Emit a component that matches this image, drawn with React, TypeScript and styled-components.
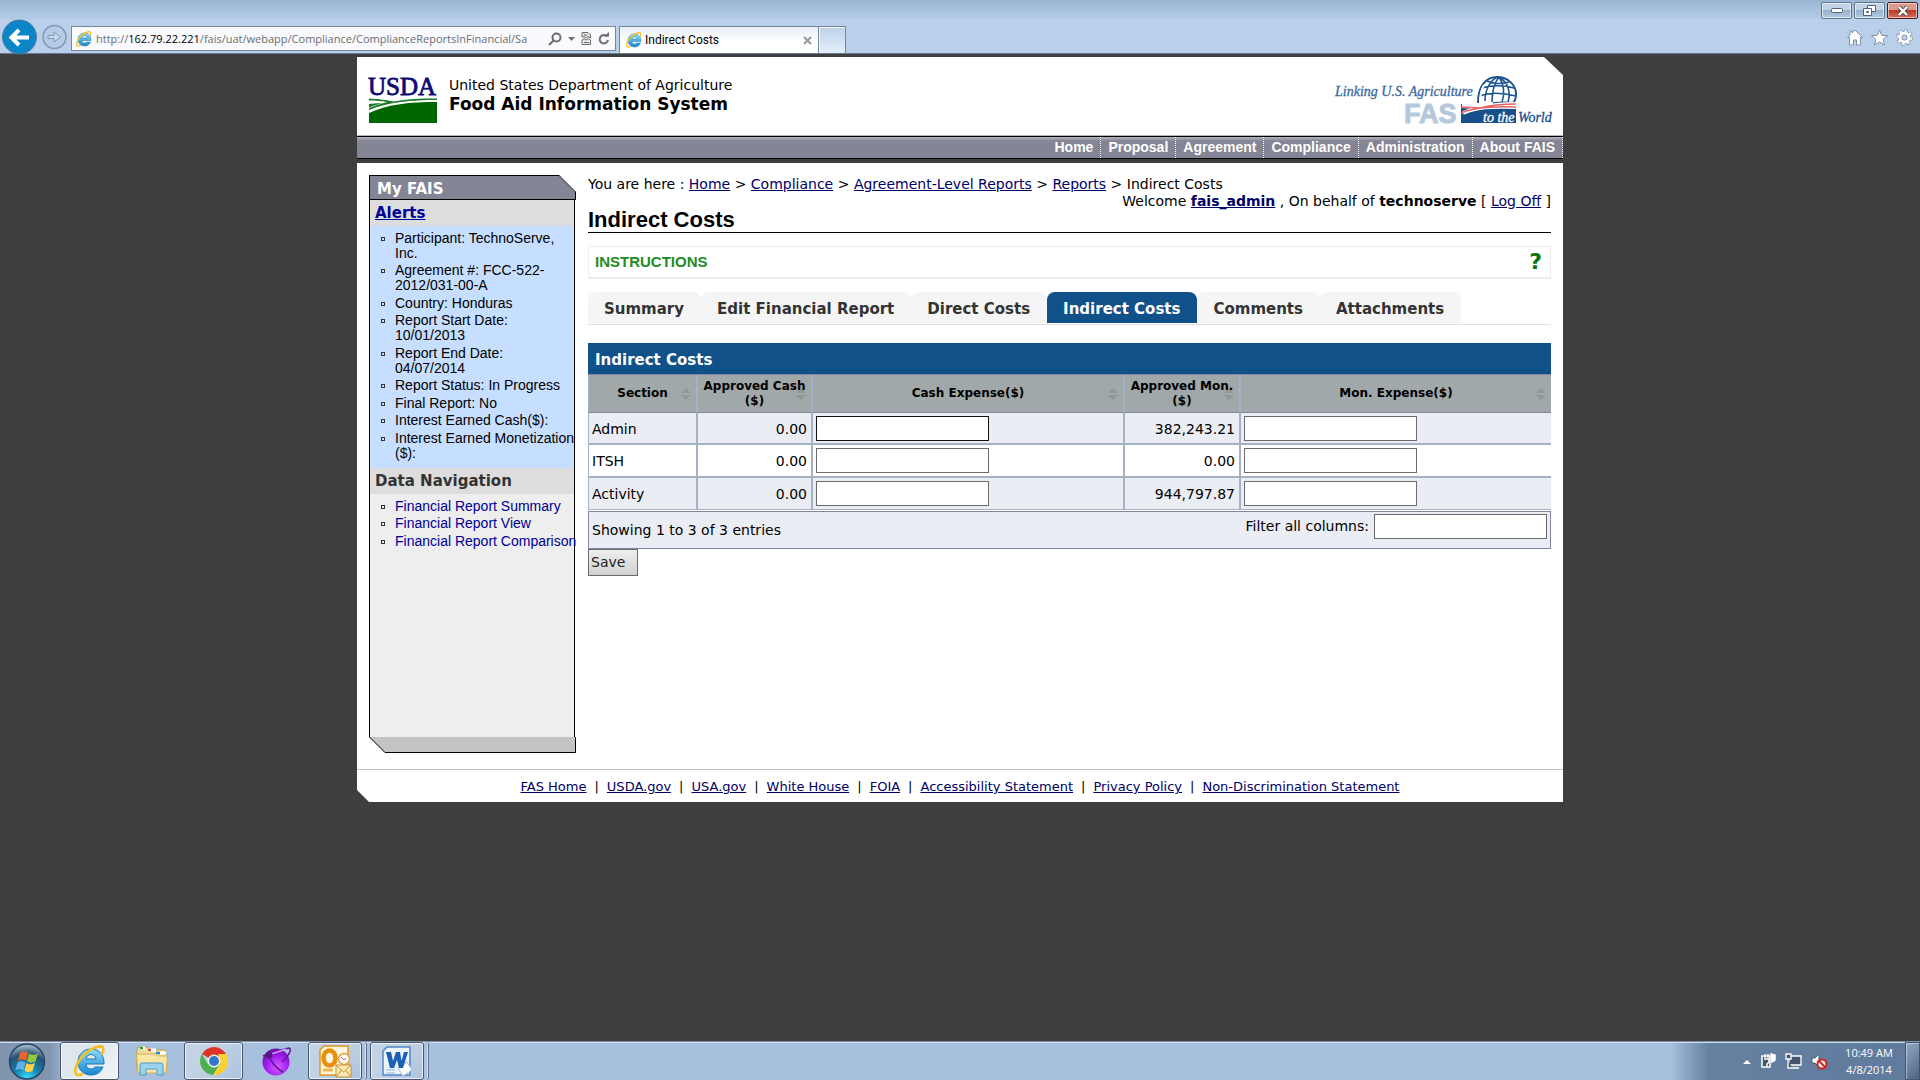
import React from "react";
import styled, { createGlobalStyle, css } from "styled-components";

const verdana = `Verdana, "DejaVu Sans", sans-serif`;
const arial = `Arial, "Liberation Sans", sans-serif`;
const segoe = `"Segoe UI", "Open Sans", "Noto Sans", sans-serif`;
const segoeNarrow = `"Segoe UI", Roboto, "Noto Sans", sans-serif`;

const GlobalStyle = createGlobalStyle`
  *, *::before, *::after { box-sizing: border-box; }
  body { margin: 0; background: #3e3e3e; color: #000; font: 14px/17px ${verdana}; }
  ul { list-style: none; margin: 0; padding: 0; }
  button, input { font: inherit; margin: 0; }
  svg { display: block; flex: none; overflow: visible; }
`;

const Screen = styled.div`
  display: flex;
  flex-direction: column;
  min-height: 100vh;
`;

/* Browser window */

const Chrome = styled.header`
  position: relative;
  display: flex;
  align-items: flex-end;
  height: 54px;
  border-bottom: 1px solid #66788f;
  background: linear-gradient(#9bb6d2 0, #b2cae5 18px, #bad0ea 20px);
`;

const NavButton = styled.button`
  border: 0;
  padding: 0;
  background: none;
`;

const BackForward = styled.div`
  display: flex;
  align-items: center;
  width: 71px;
  height: 34px;
  gap: 4px;
  padding: 2px 0 0 1px;
`;

const AddressBar = styled.div`
  display: flex;
  align-items: center;
  width: 545px;
  height: 25px;
  margin-bottom: 2px;
  padding: 0 5px 0 4px;
  gap: 4px;
  border: 1px solid #75859a;
  background: #f8fafd;
  color: #6d6d6d;
  font: 11px/20px ${segoe};
`;

const Address = styled.div`
  flex: 1;
  white-space: nowrap;
  b { color: #000; font-weight: 400; }
`;

const AddressTools = styled.div`
  display: flex;
  align-items: center;
  gap: 6px;
`;

const BrowserTab = styled.div`
  display: flex;
  align-items: center;
  gap: 3px;
  width: 200px;
  height: 27px;
  margin-left: 3px;
  padding: 0 6px;
  border: 1px solid #75859a;
  border-bottom: 0;
  background: linear-gradient(#e9eff5, #fff 60%);
  font: 12px/20px ${segoeNarrow};
  span { flex: 1; }
`;

const NewTab = styled.button`
  width: 27px;
  height: 27px;
  border: 1px solid #75859a;
  border-width: 1px 1px 0 0;
  background: linear-gradient(#bdd2e9, #e4eef8);
  box-shadow: inset 1px 1px #f4f8fc;
`;

const WindowSide = styled.div`
  display: flex;
  flex-direction: column;
  align-items: flex-end;
  justify-content: space-between;
  height: 100%;
  margin-left: auto;
  padding: 2px 2px 7px 0;
`;

const WindowButtons = styled.div`
  display: flex;
  gap: 2px;
`;

const WindowButton = styled.button<{ $close?: boolean }>`
  display: grid;
  place-items: center;
  width: 31px;
  height: 17px;
  padding: 0;
  border: 1px solid ${(p) => (p.$close ? "#5a1722" : "#5f7690")};
  border-radius: 2px;
  box-shadow: inset 0 0 0 1px rgba(255, 255, 255, 0.55);
  background: ${(p) =>
    p.$close
      ? "linear-gradient(#dc9a8d 45%, #b93a25 50%, #d4705a)"
      : "linear-gradient(#c0d3e7 45%, #96b1cd 50%, #b4cbe3)"};
`;

const ToolIcons = styled.div`
  display: flex;
  gap: 8px;
  padding-right: 5px;
`;

/* Site */

const Desktop = styled.main`
  flex: 1;
  padding: 3px 12px 40px;
`;

const Site = styled.div`
  width: 100%;
  max-width: 1206px;
  margin: 0 auto;
`;

const Banner = styled.header`
  display: flex;
  align-items: center;
  height: 79px;
  padding: 8px 10px 0 11px;
  border-bottom: 1px solid #b5b5b5;
  background: #fff;
  clip-path: polygon(0 0, calc(100% - 19px) 0, 100% 18px, 100% 100%, 0 100%);
`;

const BannerTitle = styled.div`
  flex: 1;
  padding: 0 0 10px 11px;
  font-size: 14px;
  line-height: 19px;
  strong { display: block; font-size: 17px; }
`;

const MainMenu = styled.nav`
  display: flex;
  justify-content: flex-end;
  height: 23px;
  border: solid #000;
  border-width: 1px 0;
  background: linear-gradient(#b4b4c0, #848594 4px);
  a {
    padding: 0 7px;
    border-right: 1px dotted #fff;
    color: #fff;
    font: bold 14px/20px ${arial};
    text-decoration: none;
  }
`;

const Body = styled.div`
  margin-top: 4px;
  background: #fff;
  clip-path: polygon(0 0, 100% 0, 100% 100%, 12px 100%, 0 calc(100% - 12px));
`;

const Columns = styled.div`
  display: grid;
  grid-template-columns: 207px minmax(0, 1fr);
  gap: 12px;
  padding: 12px 12px 16px;
`;

const Sidebar = styled.aside`
  display: flex;
  flex-direction: column;
  min-height: 578px;
`;

const SideTitle = styled.div`
  position: relative;
  height: 25px;
  padding-left: 7px;
  border: 1px solid #000;
  background: #848594;
  color: #fff;
  font: bold 15px/26px ${verdana};
  svg { position: absolute; top: -1px; right: -1px; overflow: hidden; }
`;

const SidePanel = styled.div`
  flex: 1;
  margin-right: 1px;
  border: solid #000;
  border-width: 0 1px;
  background: #eee;
`;

const SideHeading = styled.h2`
  height: 26px;
  margin: 0;
  padding-left: 5px;
  background: #ddd;
  color: #333;
  font: bold 15px/27px ${verdana};
  a { color: #009; }
`;

const sideList = css`
  font: 14px/15px ${arial};
  li {
    position: relative;
    margin: 0 -2px 2px 0;
    padding-left: 25px;
  }
  li:nth-child(even) { margin-bottom: 3px; }
  li::before {
    content: "";
    position: absolute;
    top: 6px;
    left: 11px;
    width: 4px;
    height: 4px;
    border: 1px solid #333;
  }
`;

const AlertList = styled.ul`
  ${sideList}
  height: 242px;
  padding-top: 5px;
  background: #c6deff;
`;

const LinkList = styled.ul`
  ${sideList}
  padding-top: 5px;
  white-space: nowrap;
  a { color: #009; text-decoration: none; }
`;

const SideFoot = styled.svg`
  width: 207px;
  height: 16px;
`;

const Content = styled.section`
  padding-top: 1px;
  a { color: #006; }
`;

const Welcome = styled.div`
  text-align: right;
`;

const PageTitle = styled.h1`
  margin: 0 0 13px;
  padding-bottom: 3px;
  border-bottom: 1px solid #000;
  font: bold 22px/19px ${arial};
`;

const Instructions = styled.div`
  display: flex;
  align-items: center;
  justify-content: space-between;
  height: 33px;
  padding: 0 8px 0 6px;
  border: 1px solid #eee;
  border-bottom-width: 2px;
  color: #228b22;
  font: bold 15px/30px ${arial};
`;

const HelpButton = styled.button`
  padding: 0;
  border: 0;
  background: none;
  color: #0a730a;
  font: bold 22px/28px ${verdana};
`;

const Tabs = styled.nav`
  display: flex;
  margin: 13px 0 18px;
  padding-bottom: 1px;
  border-bottom: 1px solid #e0e0e0;
`;

const Tab = styled.a<{ $active?: boolean }>`
  && {
    padding: 4px 17px 0 16px;
    border-radius: 8px 8px 0 0;
    background: ${(p) => (p.$active ? "#11518a" : "#f5f5f5")};
    color: ${(p) => (p.$active ? "#fff" : "#333")};
    font-weight: bold;
    font-size: 15px;
    line-height: 27px;
    text-decoration: none;
  }
`;

const Grid = styled.table`
  width: 100%;
  border-collapse: separate;
  border-spacing: 0;
  table-layout: fixed;
  caption {
    padding: 3px 0 0 7px;
    border-bottom: 1px solid #84859a;
    background: #11518a;
    color: #fff;
    text-align: left;
    font: bold 15px/28px ${verdana};
  }
  col:nth-child(1) { width: 108px; }
  col:nth-child(2) { width: 115px; }
  col:nth-child(4) { width: 116px; }
`;

const HeadCell = styled.th`
  height: 38px;
  padding: 0;
  border: solid #a5b1c5;
  border-width: 0 0 0 2px;
  border-bottom: 1px solid #84859a;
  background: #a0a8a9;
  font-size: 12px;
  line-height: 15px;
  &:first-child { border-left-width: 1px; }
`;

const HeadLabel = styled.div<{ $wide?: boolean }>`
  position: relative;
  padding: 0 ${(p) => (p.$wide ? "20px" : "0")};
  svg { position: absolute; top: calc(50% - 7px); right: 4px; z-index: 0; }
  span { position: relative; z-index: 1; }
`;

const Row = styled.tr<{ $odd?: boolean }>`
  background: ${(p) => (p.$odd ? "#eaedf3" : "#fff")};
`;

const Cell = styled.td<{ $right?: boolean; $field?: boolean }>`
  height: 33px;
  padding: ${(p) => (p.$field ? "0" : "2px")} 4px 0 3px;
  border: solid #a5b1c5;
  border-width: 0 0 2px 2px;
  text-align: ${(p) => (p.$right ? "right" : "left")};
  &:first-child { border-left-width: 1px; }
  tr:first-child > & { height: 32px; }
  tr:last-child > & { height: 32px; border-bottom-width: 1px; }
`;

const Field = styled.input<{ $focus?: boolean }>`
  display: block;
  width: 173px;
  height: 25px;
  padding: 0 3px;
  border: 1px solid ${(p) => (p.$focus ? "#111" : "#6b6b6b")};
  background: #fff;
`;

const GridFoot = styled.div`
  display: flex;
  align-items: flex-start;
  justify-content: space-between;
  height: 38px;
  margin-top: 1px;
  padding: 2px 3px;
  border: 1px solid #84859a;
  background: #eaedf3;
  span { line-height: 32px; }
  label { display: flex; align-items: center; gap: 5px; }
`;

const SaveButton = styled.button`
  display: block;
  width: 50px;
  height: 27px;
  padding: 0 0 0 2px;
  border: 1px solid #6b6b6b;
  background: linear-gradient(#eee, #d2d2d2);
  color: #222;
  text-align: left;
`;

const FootLinks = styled.footer`
  display: flex;
  justify-content: center;
  gap: 8px;
  height: 33px;
  border-top: 1px solid #c0c0c0;
  font-size: 13px;
  line-height: 33px;
  a { color: #006; }
`;

/* Taskbar */

const Taskbar = styled.footer`
  display: flex;
  align-items: stretch;
  height: 39px;
  border-top: 1px solid #7c8ea6;
  box-shadow: inset 0 1px #cfdcea;
  background: linear-gradient(90deg, #8295ae 0, #8295ae 50px, #a6c0dd 70px, #a6c0dd 87%, #6580a1 89%, #5f7a9c);
`;

const TaskButton = styled.button<{ $look?: "open" | "active" | "start"; $stacked?: boolean }>`
  display: grid;
  place-items: center;
  width: ${(p) => (p.$stacked || p.$look === "start" ? "54px" : "59px")};
  margin: 0 0 0 3px;
  padding: 0;
  border: 1px solid transparent;
  border-radius: 3px;
  background: none;
  ${(p) => p.$look === "start" && "margin: 0 3px 0 0;"}
  ${(p) =>
    (p.$look === "open" || p.$look === "active") &&
    css`
      border-color: #45566e;
      box-shadow: inset 0 0 0 1px rgba(255, 255, 255, 0.7);
      background: ${p.$look === "active"
        ? "linear-gradient(135deg, #dfe6ee 40%, #f1f5fa)"
        : "linear-gradient(135deg, #c4d3e4 35%, #adc4de)"};
    `}
`;

const TaskStack = styled.div`
  display: flex;
  border-right: 1px solid #5c6f88;
  padding-right: 4px;
  box-shadow: inset -1px 0 #d3e0ee;
  border-radius: 3px;
`;

const Tray = styled.div`
  display: flex;
  align-items: center;
  gap: 9px;
  margin-left: auto;
  color: #fff;
  font: 12px/17px ${segoe};
  time { width: 64px; padding-left: 2px; font-size: 11px; text-align: center; white-space: nowrap; }
`;

const ShowDesktop = styled.button`
  align-self: stretch;
  width: 15px;
  margin-left: -4px;
  padding: 0;
  border: 1px solid #3f5572;
  box-shadow: inset 1px 1px rgba(255, 255, 255, 0.4);
  background: linear-gradient(135deg, #93a9c3, #4c6585);
`;

function IeIcon({ size }: { size: number }) {
  return (
    <svg width={size} height={size} viewBox="0 0 32 32">
      <defs>
        <linearGradient id="ie" x1="0" y1="0" x2="0" y2="1">
          <stop offset="0" stopColor="#8adcf8" />
          <stop offset="1" stopColor="#1b86cf" />
        </linearGradient>
      </defs>
      <path
        d="M17 4C9 4 4 10 4 17s5 13 13 13c6 0 10-3 12-8h-8c-1 1.500-2.500 2-4 2-3 0-5-2-5-5h18C30.500 10 25 4 17 4zm-5 10c.5-3 2.500-4.500 5-4.500s4.500 1.500 5 4.500z"
        fill="url(#ie)"
        stroke="#1d78b8"
        strokeWidth="1"
      />
      <path
        d="M28 9C31 3 29 0 23 2 15 4 5 13 2 22c-2 6 0 10 6 7"
        fill="none"
        stroke="#f5bf1c"
        strokeWidth="2.600"
        strokeLinecap="round"
      />
    </svg>
  );
}

function BackIcon() {
  return (
    <svg width="37" height="34" viewBox="0 0 37 34" overflow="hidden">
      <circle cx="18.500" cy="17" r="17" fill="#0a85c7" stroke="#55799c" />
      <path d="M28 17.500H11M18 10l-7.500 7.500L18 25" fill="none" stroke="#fff" strokeWidth="4" />
    </svg>
  );
}

function ForwardIcon() {
  return (
    <svg width="25" height="26" viewBox="0 0 25 26">
      <circle cx="12.500" cy="13" r="11.500" fill="#b5cce6" stroke="#8298b4" strokeWidth="1.500" />
      <path d="M6 11.500h6V8l6.500 5-6.500 5v-3.500H6z" fill="#c9daee" stroke="#8298b4" />
    </svg>
  );
}

function SearchIcon() {
  return (
    <svg width="14" height="14" viewBox="0 0 14 14" fill="none" stroke="#6d6d6d" strokeWidth="2">
      <circle cx="8.500" cy="5.500" r="4" />
      <path d="M5.500 8.500L1 13" />
    </svg>
  );
}

function CaretIcon() {
  return (
    <svg width="7" height="4" viewBox="0 0 7 4">
      <path d="M0 0h7L3.500 4z" fill="#6d6d6d" />
    </svg>
  );
}

function BrokenPageIcon() {
  return (
    <svg width="11" height="13" viewBox="0 0 11 13" fill="#e6e6e6" stroke="#6d6d6d">
      <path d="M1 5V.5h6L9.500 3v3L7 4.500 5 6 3 4.500zM1 12.500V8l2-1.500L5 8l2-1.500L9.500 8v4.500z" />
      <path d="M3 3h3M3 10.500h5" />
    </svg>
  );
}

function ReloadIcon() {
  return (
    <svg width="12" height="13" viewBox="0 0 12 13" fill="none" stroke="#6d6d6d" strokeWidth="2">
      <path d="M9 4.500A4.200 4.200 0 1 0 10 8" />
      <path d="M6 4.500h5V0z" fill="#6d6d6d" stroke="none" />
    </svg>
  );
}

function UsdaLogo() {
  return (
    <svg width="70" height="48" viewBox="0 0 70 48" role="img" aria-label="USDA">
      <text x="0" y="19" fill="#0b0b73" stroke="#0b0b73" strokeWidth="0.800" fontFamily="Liberation Serif, serif" fontSize="25">
        USDA
      </text>
      <path d="M1 37C20 28 42 26 69 26v21H1z" fill="#060" />
      <path d="M1 22.500c10 .5 17 1.500 25 3 12-2.500 26-3 43-3V24c-26 0-48 2-68 10v-2c6-2.500 12-4.500 18-6-6-1-11-1.500-18-1.500z" fill="#1b7a2a" />
      <path d="M1 28c5-.8 9-1 13-.7C9 28.500 5 30 1 31.500z" fill="#1b7a2a" />
    </svg>
  );
}

function FasLogo() {
  return (
    <svg width="218" height="48" viewBox="0 0 218 48" role="img" aria-label="Linking U.S. Agriculture to the World">
      <g fontFamily="Liberation Serif, serif" fontStyle="italic">
        <path d="M143 27C143 10 151 1 162 1s19 8 19 17c0 4-1 7-3 9-8-1-14 0-20 0" fill="#fff" stroke="#1c5590" strokeWidth="2" />
        <path
          d="M150 25C150 14 155 4 163 1m-6 25c0-10 3-20 7-25m3 25c3-8 2-18-3-25m9 25c3-9 0-20-8-24M147 12c9-3 22-3 32 0M144 20c11-4 25-3 37 0M152 5c7 3 15 3 22 1"
          fill="none"
          stroke="#1c5590"
          strokeWidth="1.600"
        />
        <path d="M145 27c0-8 1-13 4-18" stroke="#fff" strokeWidth="2" fill="none" />
        <path d="M126 28c10 1 16 2 20 3 10-3 22-3 35-3v19h-55z" fill="#174f8b" />
        <path d="M127 30c8 0 13 1 19 2 10-3 22-4 35-4M128 37c14-6 28-7 53-6" fill="none" stroke="#fff" strokeWidth="4" />
        <path d="M126 31c8 0 13 1 19 1 11-3 22-4 36-4M126 37c14-6 31-7 55-6" fill="none" stroke="#e8635f" strokeWidth="1.600" />
        <text x="0" y="20" fontSize="14" fill="#3a6a9e" stroke="#3a6a9e" strokeWidth="0.300">
          Linking U.S. Agriculture
        </text>
        <text x="69" y="47" fontSize="27" fontFamily="Liberation Sans, sans-serif" fontStyle="normal" fontWeight="bold" fill="#b6c9dc" stroke="#b6c9dc">
          FAS
        </text>
        <text x="148" y="46" fontSize="14" fill="#fff" stroke="#fff" strokeWidth="0.300">
          to the
        </text>
        <text x="183" y="46" fontSize="14" fill="#174f8b" stroke="#174f8b" strokeWidth="0.300">
          World
        </text>
      </g>
    </svg>
  );
}

function SortIcon() {
  return (
    <svg width="12" height="14" viewBox="0 0 12 14">
      <path d="M1 6l5-5 5 5zM1 8h10l-5 5z" fill="#929798" />
    </svg>
  );
}

function StartIcon() {
  return (
    <svg width="38" height="37" viewBox="0 0 38 37">
      <defs>
        <radialGradient id="orb" cx=".5" cy="1" r=".95">
          <stop offset="0" stopColor="#3ce4ff" />
          <stop offset=".4" stopColor="#1683b4" />
          <stop offset=".75" stopColor="#28516f" />
          <stop offset="1" stopColor="#9db3c4" />
        </radialGradient>
      </defs>
      <circle cx="19" cy="18.500" r="17.500" fill="url(#orb)" stroke="#24486b" strokeWidth="1.500" />
      <path d="M12 10c3-2 5-2 8 0l-2 8c-3-2-5-2-8 0z" fill="#ee6231" />
      <path d="M21 10.500c3 2 6 1.500 9 0l-2.500 8c-3 1.500-5.500 1.500-8.500 0z" fill="#93c83e" />
      <path d="M9.500 19.500c3-2 5-1.500 8 0l-2 8c-3-2-5-2-8 0z" fill="#5fb2e8" />
      <path d="M18.500 20c3 2 5.500 1.500 8.500 0l-2.500 8c-3 1.500-5 1.500-8-.5z" fill="#fdd14a" />
    </svg>
  );
}

function FolderIcon() {
  return (
    <svg width="34" height="32" viewBox="0 0 34 32">
      <path d="M2 6l1-4h9l2 3h16l1 4v17H2z" fill="#f3df98" stroke="#c5a04b" />
      <path d="M5 3h5M13 5h8M22 8h9" stroke="#fff" strokeWidth="3" />
      <path d="M5 3h3" stroke="#2ea043" strokeWidth="2.500" />
      <path d="M13 5h3" stroke="#d34d34" strokeWidth="2.500" />
      <path d="M21 8h4" stroke="#2388d8" strokeWidth="2.500" />
      <path d="M1.500 9h20l2 2h9L31 28H3z" fill="#f7e6a4" stroke="#d0ae5c" />
      <path d="M5 30V20q0-2 2-2h19q2 0 2 2v10h-6v-6H11v6z" fill="#9ad3ee" stroke="#5698bd" />
    </svg>
  );
}

function ChromeIcon() {
  return (
    <svg width="30" height="30" viewBox="0 0 30 30">
      <path d="M15 15L2.900 8A14 14 0 0 1 27.100 8z" fill="#dd3327" />
      <path d="M2.900 8A14 14 0 0 0 14 29l7-11L9 18z" fill="#4caf4d" />
      <path d="M27.100 8A14 14 0 0 1 14 29l7.500-11L19 8z" fill="#fdd030" />
      <circle cx="15" cy="15" r="6.500" fill="#f2f2f2" />
      <circle cx="15" cy="15" r="5" fill="#3377c4" />
    </svg>
  );
}

function GlobeIcon() {
  return (
    <svg width="32" height="32" viewBox="0 0 32 32">
      <defs>
        <radialGradient id="violet" cx=".55" cy=".7" r=".7">
          <stop offset="0" stopColor="#d45cff" />
          <stop offset=".6" stopColor="#a01cf0" />
          <stop offset="1" stopColor="#6a10ac" />
        </radialGradient>
      </defs>
      <circle cx="16" cy="17" r="13.500" fill="url(#violet)" />
      <path d="M3 11C12 8 23 4 29 3c4 1-2 10-7 14M9 10c2 8 7 13 14 17" fill="none" stroke="#631397" strokeWidth="1.500" />
      <path d="M11 9c6-2 10-3 15-5" fill="none" stroke="#d79bf5" strokeWidth="1.500" />
      <circle cx="9" cy="10" r="3.500" fill="#5b168c" />
    </svg>
  );
}

function OutlookIcon() {
  return (
    <svg width="34" height="34" viewBox="0 0 34 34">
      <path d="M2 6l4-4h24v29H2z" fill="#fff6de" stroke="#e0981c" strokeWidth="1.500" />
      <ellipse cx="11.500" cy="14" rx="6" ry="7.500" fill="none" stroke="#e88f0c" strokeWidth="4.500" />
      <path d="M5 26h10" stroke="#efb64c" strokeWidth="3" />
      <circle cx="26" cy="15" r="5.500" fill="#fff" stroke="#e5a63b" strokeWidth="1.500" />
      <path d="M23 13l3 3 2-2" fill="none" stroke="#d04a1f" />
      <path d="M18 21h15v12H18z" fill="#fbe9b2" stroke="#c3923b" />
      <path d="M18 21l7.500 7 7.500-7M18 33l5.500-7M33 33l-5.500-7" fill="none" stroke="#c3923b" />
    </svg>
  );
}

function WordIcon() {
  return (
    <svg width="32" height="32" viewBox="0 0 32 32">
      <path d="M2 6l4-4h23v28H2z" fill="#eef4fb" stroke="#4f86c6" strokeWidth="1.500" />
      <path d="M17 23l9-6 5 8-9 6z" fill="#fff" stroke="#aebfd4" />
      <path d="M5 7h5l2 9 3-9h4l1.500 9L23 7h4l-5 16h-4l-2-8-3 8H9z" fill="#1b5fb8" />
      <path d="M5 25h9M5 28h9" stroke="#8fb3dd" />
    </svg>
  );
}

const menu = ["Home", "Proposal", "Agreement", "Compliance", "Administration", "About FAIS"];
const alerts = [
  "Participant: TechnoServe, Inc.",
  "Agreement #: FCC-522-2012/031-00-A",
  "Country: Honduras",
  "Report Start Date: 10/01/2013",
  "Report End Date: 04/07/2014",
  "Report Status: In Progress",
  "Final Report: No",
  "Interest Earned Cash($):",
  "Interest Earned Monetization ($):",
];
const dataLinks = ["Financial Report Summary", "Financial Report View", "Financial Report Comparison"];
const crumbs = ["Home", "Compliance", "Agreement-Level Reports", "Reports"];
const tabs = ["Summary", "Edit Financial Report", "Direct Costs", "Indirect Costs", "Comments", "Attachments"];
const heads = ["Section", "Approved Cash ($)", "Cash Expense($)", "Approved Mon. ($)", "Mon. Expense($)"];
const rows = [
  { section: "Admin", cash: "0.00", mon: "382,243.21" },
  { section: "ITSH", cash: "0.00", mon: "0.00" },
  { section: "Activity", cash: "0.00", mon: "944,797.87" },
];
const footLinks = [
  "FAS Home",
  "USDA.gov",
  "USA.gov",
  "White House",
  "FOIA",
  "Accessibility Statement",
  "Privacy Policy",
  "Non-Discrimination Statement",
];

function BrowserChrome() {
  return (
    <Chrome>
      <BackForward>
        <NavButton aria-label="Back"><BackIcon /></NavButton>
        <NavButton aria-label="Forward"><ForwardIcon /></NavButton>
      </BackForward>
      <AddressBar>
        <IeIcon size={16} />
        <Address role="textbox" tabIndex={0} aria-label="Address">
          http://<b>162.79.22.221</b>/fais/uat/webapp/Compliance/ComplianceReportsInFinancial/Sa
        </Address>
        <AddressTools>
          <SearchIcon />
          <CaretIcon />
          <BrokenPageIcon />
          <ReloadIcon />
        </AddressTools>
      </AddressBar>
      <BrowserTab>
        <IeIcon size={16} />
        <span>Indirect Costs</span>
        <NavButton aria-label="Close tab">
          <svg width="9" height="9" viewBox="0 0 9 9">
            <path d="M1 1l7 7M8 1L1 8" stroke="#999" strokeWidth="2" />
          </svg>
        </NavButton>
      </BrowserTab>
      <NewTab aria-label="New tab" />
      <WindowSide>
        <WindowButtons>
          <WindowButton aria-label="Minimize">
            <svg width="12" height="5" viewBox="0 0 12 5">
              <rect x=".5" y=".5" width="11" height="4" rx="1" fill="#fff" stroke="#53647a" />
            </svg>
          </WindowButton>
          <WindowButton aria-label="Restore">
            <svg width="13" height="11" viewBox="0 0 13 11" fill="#fff" stroke="#53647a">
              <path d="M4.500.5h8v6h-8z" />
              <path d="M.5 3.500h8v7h-8z" />
              <path d="M3.500 6.500h2v1h-2z" fill="#9ab4cf" />
            </svg>
          </WindowButton>
          <WindowButton $close aria-label="Close">
            <svg width="12" height="10" viewBox="0 0 12 10">
              <path d="M2 1l8 8M10 1L2 9" stroke="#4a4f5c" strokeWidth="4" />
              <path d="M2 1l8 8M10 1L2 9" stroke="#fff" strokeWidth="2.400" />
            </svg>
          </WindowButton>
        </WindowButtons>
        <ToolIcons>
          <svg width="16" height="17" viewBox="0 0 16 17">
            <path d="M8 1l7.500 7.500h-2V16h-4v-5h-3v5h-4V8.500h-2L3 6V2h2v2z" fill="#fff" stroke="#8090a5" />
          </svg>
          <svg width="17" height="17" viewBox="0 0 17 17">
            <path d="M8.500 1l2.200 5.300 5.800.4-4.400 3.700 1.400 5.600-5-3-5 3 1.400-5.600L.5 6.700l5.800-.4z" fill="#fff" stroke="#8090a5" />
          </svg>
          <svg width="17" height="17" viewBox="0 0 17 17" fill="none">
            <circle cx="8.500" cy="8.500" r="7" stroke="#8090a5" strokeWidth="3" strokeDasharray="3 2.500" />
            <circle cx="8.500" cy="8.500" r="4.500" stroke="#8090a5" strokeWidth="4.500" />
            <circle cx="8.500" cy="8.500" r="6.800" stroke="#fff" strokeWidth="2" strokeDasharray="2.300 3.050" />
            <circle cx="8.500" cy="8.500" r="4.500" stroke="#fff" strokeWidth="3" />
          </svg>
        </ToolIcons>
      </WindowSide>
    </Chrome>
  );
}

function SideColumn() {
  return (
    <Sidebar>
      <SideTitle>
        My FAIS
        <svg width="17" height="17" viewBox="0 0 17 17">
          <path d="M0 0h17v17z" fill="#fff" />
          <path d="M0 .5L16.500 17" stroke="#333" />
        </svg>
      </SideTitle>
      <SidePanel>
        <SideHeading><a href="#alerts">Alerts</a></SideHeading>
        <AlertList>{alerts.map((a) => <li key={a}>{a}</li>)}</AlertList>
        <SideHeading>Data Navigation</SideHeading>
        <LinkList>
          {dataLinks.map((l) => <li key={l}><a href="#report">{l}</a></li>)}
        </LinkList>
      </SidePanel>
      <SideFoot viewBox="0 0 207 16">
        <path d="M0 0h207v16H16z" fill="#c4c4c4" />
        <path d="M.5 0L16 15.500h190.500V0" fill="none" stroke="#000" />
      </SideFoot>
    </Sidebar>
  );
}

function CostGrid() {
  return (
    <>
      <Grid>
        <caption>Indirect Costs</caption>
        <colgroup><col /><col /><col /><col /><col /></colgroup>
        <thead>
          <tr>
            {heads.map((h, i) => (
              <HeadCell key={h} scope="col">
                <HeadLabel $wide={i % 2 === 0}><SortIcon /><span>{h}</span></HeadLabel>
              </HeadCell>
            ))}
          </tr>
        </thead>
        <tbody>
          {rows.map((r, i) => (
            <Row key={r.section} $odd={i % 2 === 0}>
              <Cell>{r.section}</Cell>
              <Cell $right>{r.cash}</Cell>
              <Cell $field><Field $focus={i === 0} aria-label={`${r.section} cash expense`} /></Cell>
              <Cell $right>{r.mon}</Cell>
              <Cell $field><Field aria-label={`${r.section} monetization expense`} /></Cell>
            </Row>
          ))}
        </tbody>
      </Grid>
      <GridFoot>
        <span>Showing 1 to 3 of 3 entries</span>
        <label>Filter all columns:<Field /></label>
      </GridFoot>
      <SaveButton>Save</SaveButton>
    </>
  );
}

function TaskbarRow() {
  return (
    <Taskbar>
      <TaskButton $look="start" aria-label="Start"><StartIcon /></TaskButton>
      <TaskButton $look="active" aria-label="Internet Explorer"><IeIcon size={32} /></TaskButton>
      <TaskButton aria-label="Explorer"><FolderIcon /></TaskButton>
      <TaskButton $look="open" aria-label="Chrome"><ChromeIcon /></TaskButton>
      <TaskButton aria-label="Globe"><GlobeIcon /></TaskButton>
      <TaskStack><TaskButton $look="open" $stacked aria-label="Outlook"><OutlookIcon /></TaskButton></TaskStack>
      <TaskStack><TaskButton $look="open" $stacked aria-label="Word"><WordIcon /></TaskButton></TaskStack>
      <Tray>
        <svg width="8" height="5" viewBox="0 0 8 5"><path d="M0 5l4-4 4 4z" fill="#fff" /></svg>
        <svg width="16" height="16" viewBox="0 0 16 16" fill="none" stroke="#fff" strokeWidth="1.500">
          <path d="M2 3h8v11H2z" fill="#44566e" />
          <path d="M5 1v4M8 1v4M4 6h5v3l-2 2v3" />
          <path d="M11 1l4 1v5l-3 2z" fill="#fff" />
        </svg>
        <svg width="17" height="16" viewBox="0 0 17 16" fill="#44566e" stroke="#fff" strokeWidth="1.300">
          <path d="M4 3h12v9H4zM7 15h7" />
          <path d="M1 1h5v5H1zM3 6v9h4" />
        </svg>
        <svg width="16" height="16" viewBox="0 0 16 16">
          <path d="M1 5h3l4-4v13l-4-4H1z" fill="#fff" stroke="#4a5c74" />
          <circle cx="11" cy="11" r="4.500" fill="#fff" stroke="#d6201f" strokeWidth="2" />
          <path d="M8 8l6 6" stroke="#d6201f" strokeWidth="2" />
        </svg>
        <time>10:49 AM<br />4/8/2014</time>
        <ShowDesktop aria-label="Show desktop" />
      </Tray>
    </Taskbar>
  );
}

export default function App() {
  return (
    <Screen>
      <GlobalStyle />
      <BrowserChrome />
      <Desktop>
        <Site>
          <Banner>
            <UsdaLogo />
            <BannerTitle>
              United States Department of Agriculture
              <strong>Food Aid Information System</strong>
            </BannerTitle>
            <FasLogo />
          </Banner>
          <MainMenu>{menu.map((m) => <a key={m} href="#menu">{m}</a>)}</MainMenu>
          <Body>
            <Columns>
              <SideColumn />
              <Content>
                <div>
                  You are here :{" "}
                  {crumbs.map((c) => (
                    <React.Fragment key={c}><a href="#crumb">{c}</a> &gt; </React.Fragment>
                  ))}
                  Indirect Costs
                </div>
                <Welcome>
                  Welcome <a href="#user"><b>fais_admin</b></a> , On behalf of <b>technoserve</b> [ <a href="#logoff">Log Off</a> ]
                </Welcome>
                <PageTitle>Indirect Costs</PageTitle>
                <Instructions>
                  INSTRUCTIONS
                  <HelpButton aria-label="Help">?</HelpButton>
                </Instructions>
                <Tabs>
                  {tabs.map((t) => (
                    <Tab key={t} href="#tab" $active={t === "Indirect Costs"}>{t}</Tab>
                  ))}
                </Tabs>
                <CostGrid />
              </Content>
            </Columns>
            <FootLinks>
              {footLinks.map((l, i) => (
                <React.Fragment key={l}>
                  {i > 0 && <span>|</span>}
                  <a href="#foot">{l}</a>
                </React.Fragment>
              ))}
            </FootLinks>
          </Body>
        </Site>
      </Desktop>
      <TaskbarRow />
    </Screen>
  );
}
